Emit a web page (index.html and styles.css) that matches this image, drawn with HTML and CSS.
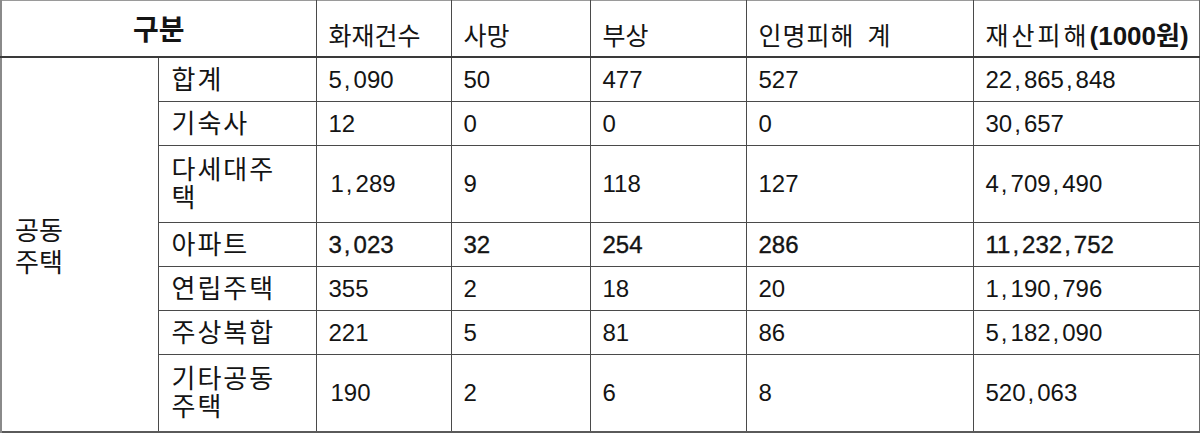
FILE: index.html
```html
<!DOCTYPE html>
<html lang="ko">
<head>
<meta charset="utf-8">
<title>공동주택 화재 현황</title>
<link rel="stylesheet" href="styles.css">
</head>
<body>
<table class="stats">
  <colgroup>
    <col class="c-grp">
    <col class="c-sub">
    <col class="c-fire">
    <col class="c-death">
    <col class="c-injury">
    <col class="c-casualty">
    <col class="c-property">
  </colgroup>
  <thead>
    <tr class="r-head">
      <th colspan="2" class="h-main">구분</th>
      <th>화재건수</th>
      <th>사망</th>
      <th>부상</th>
      <th class="h-cas">인명피해 계</th>
      <th><span class="h-prop">재산피해</span><b class="unit">(1000원)</b></th>
    </tr>
  </thead>
  <tbody>
    <tr class="r-one">
      <td rowspan="7" class="grp">공동<br>주택</td>
      <td class="sub">합계</td>
      <td>5<span class="cm">,</span>090</td><td>50</td><td>477</td><td>527</td><td>22<span class="cm">,</span>865<span class="cm">,</span>848</td>
    </tr>
    <tr class="r-one">
      <td class="sub">기숙사</td>
      <td>12</td><td>0</td><td>0</td><td>0</td><td>30<span class="cm">,</span>657</td>
    </tr>
    <tr class="r-two">
      <td class="sub">다세대주<br>택</td>
      <td class="ind">1<span class="cm">,</span>289</td><td>9</td><td>118</td><td>127</td><td>4<span class="cm">,</span>709<span class="cm">,</span>490</td>
    </tr>
    <tr class="r-one strong">
      <td class="sub">아파트</td>
      <td>3<span class="cm">,</span>023</td><td>32</td><td>254</td><td>286</td><td>11<span class="cm">,</span>232<span class="cm">,</span>752</td>
    </tr>
    <tr class="r-one">
      <td class="sub">연립주택</td>
      <td>355</td><td>2</td><td>18</td><td>20</td><td>1<span class="cm">,</span>190<span class="cm">,</span>796</td>
    </tr>
    <tr class="r-one">
      <td class="sub">주상복합</td>
      <td>221</td><td>5</td><td>81</td><td>86</td><td>5<span class="cm">,</span>182<span class="cm">,</span>090</td>
    </tr>
    <tr class="r-two">
      <td class="sub">기타공동<br>주택</td>
      <td class="ind">190</td><td>2</td><td>6</td><td>8</td><td>520<span class="cm">,</span>063</td>
    </tr>
  </tbody>
</table>
</body>
</html>
```

FILE: styles.css
```css
html, body {
  margin: 0;
  padding: 0;
  background: #ffffff;
}

.stats {
  border-collapse: collapse;
  table-layout: fixed;
  width: 1199px;
  font-family: "Liberation Sans", "Noto Sans CJK KR", sans-serif;
  font-size: 24px;
  color: #141414;
  border-top: 1px solid #9a9a9a;
  border-left: 2px solid #8a8a8a;
  border-right: 2px solid #6a6a6a;
  border-bottom: 2px solid #5a5a5a;
}

.c-grp { width: 157px; }
.c-sub { width: 158px; }
.c-fire { width: 135px; }
.c-death { width: 139px; }
.c-injury { width: 156px; }
.c-casualty { width: 227px; }
.c-property { width: 227px; }

.stats th,
.stats td {
  border: 1px solid #4a4a4a;
  padding: 0 0 0 12px;
  text-align: left;
  vertical-align: middle;
  line-height: 28px;
  font-weight: normal;
}

.stats thead th {
  border-top: 1px solid #9a9a9a;
  border-bottom: 2px solid #3a3a3a;
  padding-top: 14px;
  height: 41px;
  font-size: 25px;
}

.stats thead th.h-main {
  text-align: center;
  font-weight: bold;
  font-size: 28px;
  padding: 4px 0 0 0;
}

.stats thead th.h-cas {
  word-spacing: 5px;
  letter-spacing: 1px;
}

.h-prop {
  letter-spacing: 3px;
}

.unit {
  font-weight: bold;
  font-size: 26px;
}

.cm {
  margin: 0 3px 0 2px;
}

.r-one td { height: 43px; }
.r-two td { height: 76px; }

.stats td.grp {
  padding-left: 13px;
  padding-top: 4px;
  font-size: 26px;
  line-height: 32px;
  border-left: 2px solid #8a8a8a;
}

.stats td.sub {
  padding-left: 13px;
  font-size: 26px;
  letter-spacing: 2px;
}

.stats td.ind {
  padding-left: 14px;
}

.strong td {
  -webkit-text-stroke: 0.35px #141414;
}

.strong td.sub {
  -webkit-text-stroke: 0;
}
```
